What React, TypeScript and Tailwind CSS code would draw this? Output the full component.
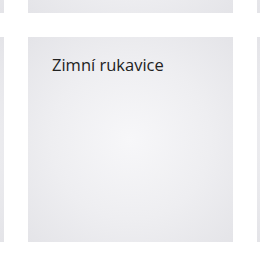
import React from "react";

const Card = ({ title }: { title?: string }) => (
  <div className="w-[205px] h-[205px] shrink-0 bg-[radial-gradient(circle_at_50%_50%,#f7f7f9_0%,#eeeef1_55%,#e4e4e8_100%)] pl-[24px] pt-[16px]">
    {title && (
      <div className="text-[16.5px] leading-[24px] text-[#222222] font-['Open_Sans',sans-serif]">
        {title}
      </div>
    )}
  </div>
);

export default function App() {
  return (
    <div className="w-[260px] h-[280px] overflow-hidden bg-white">
      <div className="flex flex-col gap-[24px] mt-[-192px] ml-[-201px] w-max">
        <div className="flex gap-[24px]">
          <Card />
          <Card />
          <Card />
        </div>
        <div className="flex gap-[24px]">
          <Card />
          <Card title="Zimní rukavice" />
          <Card />
        </div>
      </div>
    </div>
  );
}
